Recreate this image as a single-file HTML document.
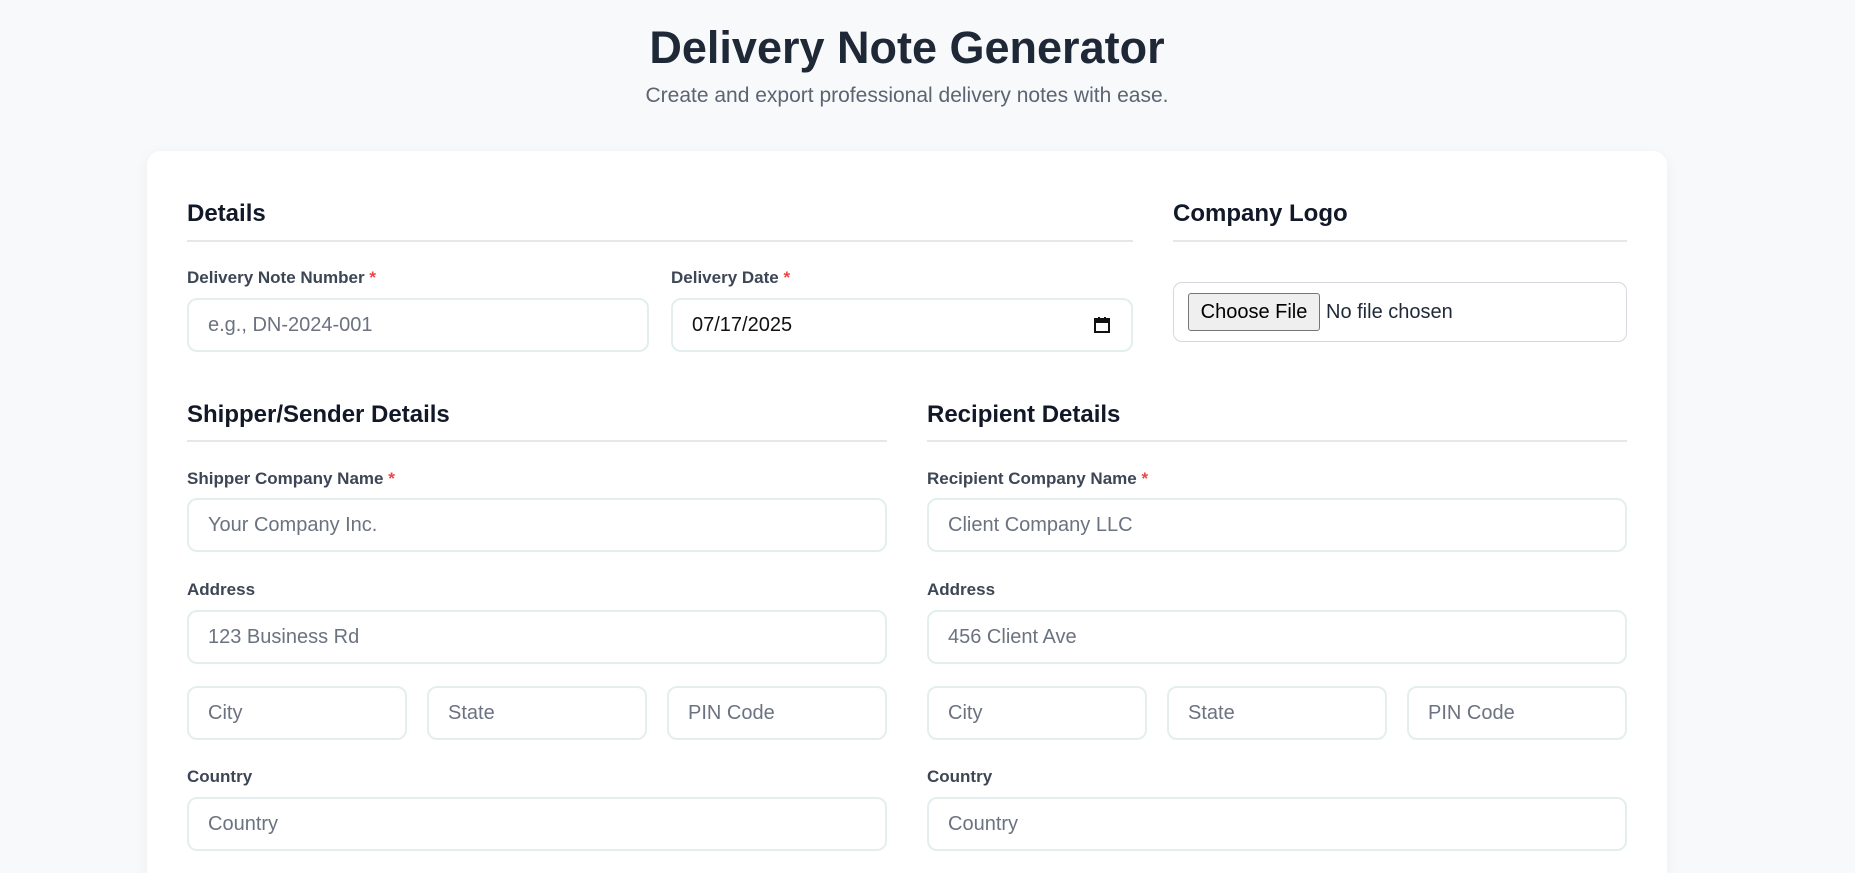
<!DOCTYPE html>
<html style="height:873px;overflow:hidden"><head><meta charset="utf-8"><style>
*{box-sizing:border-box;margin:0;padding:0}
body{width:1855px;height:873px;overflow:hidden;background:#f8f9fb;font-family:"Liberation Sans",sans-serif;color:#1f2937;position:relative}
.t{position:absolute;left:0;width:1814px;text-align:center}
h1{font-weight:700;color:#1e2836;line-height:54px}
.sub{top:83px;font-size:21px;color:#5b6472;line-height:26px}
.card{position:absolute;left:147px;top:151px;width:1520px;height:722px;background:#fff;border-radius:14px 14px 0 0;box-shadow:0 4px 16px rgba(0,0,0,.05)}
.a{position:absolute}
.h{font-size:24px;font-weight:700;color:#111827;line-height:30px;height:30px}
.ln{height:2px;background:#e5e7eb}
.lb{font-size:17px;font-weight:700;color:#3d4654;line-height:22px}
.lb span{color:#ef4444}
.in{border:2px solid #e3efee;border-radius:10px;height:54px;font-size:20px;color:#6b7280;line-height:50px;padding-left:19px;background:#fff}
</style></head><body>
<div class="t" style="top:21px"><h1 style="font-size:45px">Delivery Note Generator</h1></div>
<div class="t sub">Create and export professional delivery notes with ease.</div>
<div class="card">
<div class="a h" style="left:40px;top:48px">Details</div>
<div class="a ln" style="left:40px;top:89px;width:946px"></div>
<div class="a lb" style="left:40px;top:116px">Delivery Note Number <span>*</span></div>
<div class="a in" style="left:40px;top:147px;width:462px">e.g., DN-2024-001</div>
<div class="a lb" style="left:524px;top:116px">Delivery Date <span>*</span></div>
<div class="a in" style="left:524px;top:147px;width:462px;color:#111">07/17/2025
<svg style="position:absolute;right:20px;top:16px" width="18" height="18" viewBox="0 0 18 18"><rect x="2" y="3" width="14" height="13" fill="none" stroke="#111" stroke-width="2"/><rect x="2" y="3" width="14" height="4" fill="#111"/><rect x="5" y="1" width="2" height="3" fill="#111"/><rect x="11" y="1" width="2" height="3" fill="#111"/></svg></div>
<div class="a h" style="left:1026px;top:48px">Company Logo</div>
<div class="a ln" style="left:1026px;top:89px;width:454px"></div>
<div class="a" style="left:1026px;top:131px;width:454px;height:60px;border:1.5px solid #d5d8de;border-radius:9px">
<div class="a" style="left:14px;top:10px;height:38px;width:132px;border:1px solid #767676;border-radius:3px;background:#efefef;font-size:20px;color:#000;line-height:36px;text-align:center">Choose File</div>
<div class="a" style="left:152px;top:10px;font-size:20px;color:#1f2937;line-height:38px">No file chosen</div></div>

<div class="a h" style="left:40px;top:249px">Shipper/Sender Details</div>
<div class="a ln" style="left:40px;top:289px;width:700px"></div>
<div class="a lb" style="left:40px;top:317px">Shipper Company Name <span>*</span></div>
<div class="a in" style="left:40px;top:347px;width:700px">Your Company Inc.</div>
<div class="a lb" style="left:40px;top:428px">Address</div>
<div class="a in" style="left:40px;top:459px;width:700px">123 Business Rd</div>
<div class="a in" style="left:40px;top:535px;width:220px">City</div>
<div class="a in" style="left:280px;top:535px;width:220px">State</div>
<div class="a in" style="left:520px;top:535px;width:220px">PIN Code</div>
<div class="a lb" style="left:40px;top:615px">Country</div>
<div class="a in" style="left:40px;top:646px;width:700px">Country</div>

<div class="a h" style="left:780px;top:249px">Recipient Details</div>
<div class="a ln" style="left:780px;top:289px;width:700px"></div>
<div class="a lb" style="left:780px;top:317px">Recipient Company Name <span>*</span></div>
<div class="a in" style="left:780px;top:347px;width:700px">Client Company LLC</div>
<div class="a lb" style="left:780px;top:428px">Address</div>
<div class="a in" style="left:780px;top:459px;width:700px">456 Client Ave</div>
<div class="a in" style="left:780px;top:535px;width:220px">City</div>
<div class="a in" style="left:1020px;top:535px;width:220px">State</div>
<div class="a in" style="left:1260px;top:535px;width:220px">PIN Code</div>
<div class="a lb" style="left:780px;top:615px">Country</div>
<div class="a in" style="left:780px;top:646px;width:700px">Country</div>
</div>
</body></html>
